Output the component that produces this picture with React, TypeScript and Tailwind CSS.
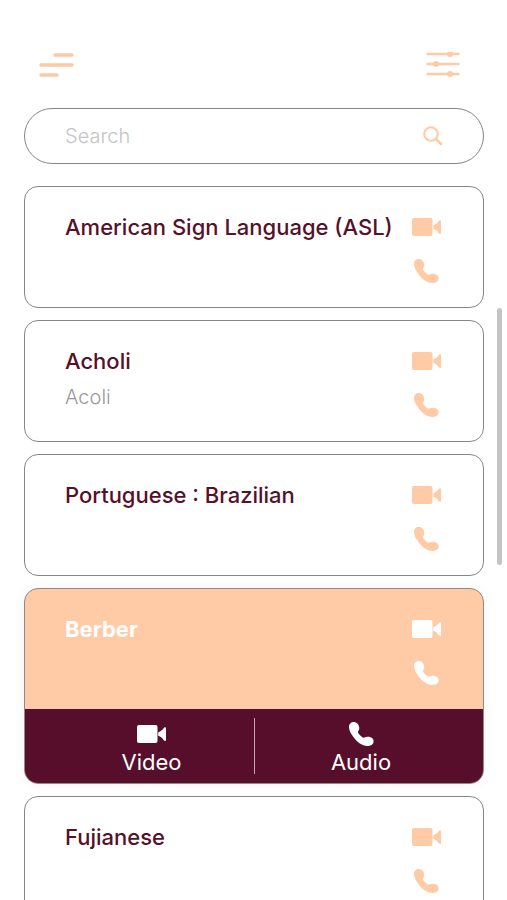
type IconProps = { className?: string };

function MenuIcon() {
  return (
    <svg width="36" height="26" viewBox="0 0 36 26" fill="none" stroke="#fac9a5" strokeWidth="3.4" strokeLinecap="round" aria-hidden="true">
      <path d="M17 3H34M3 13H34M3 23H19" />
    </svg>
  );
}

function SlidersIcon() {
  return (
    <svg width="34" height="26" viewBox="0 0 34 26" fill="none" stroke="#fecba6" strokeWidth="2.4" strokeLinecap="round" aria-hidden="true">
      <path d="M1.5 2H32.5M1.5 12H32.5M1.5 22H32.5" />
      <g fill="#fecba6" stroke="none">
        <circle cx="24" cy="2" r="3" />
        <circle cx="10" cy="12" r="3" />
        <circle cx="24" cy="22" r="3" />
      </g>
    </svg>
  );
}

function SearchIcon() {
  return (
    <svg width="20" height="20" viewBox="0 0 20 20" fill="none" stroke="#fecba6" strokeWidth="2" strokeLinecap="round" aria-hidden="true">
      <circle cx="8" cy="8" r="6.8" />
      <path d="M13 13L18 18" strokeWidth="2.6" />
    </svg>
  );
}

function VideoIcon({ className }: IconProps) {
  return (
    <svg width="30" height="18" viewBox="0 0 30 18" fill="currentColor" className={className} aria-hidden="true">
      <rect x="0" y="0" width="20.5" height="18" rx="2" />
      <path d="M21.2 7.4C23.6 6.6 25.6 4.8 27 2.8C27.8 2 29 2.2 29 3.2V15C29 16 27.8 16.2 27 15.4C25.6 13.4 23.6 11.6 21.2 10.8Z" />
    </svg>
  );
}

function PhoneIcon({ className }: IconProps) {
  return (
    <svg width="25" height="24" viewBox="0 0 25 24" fill="currentColor" className={className} aria-hidden="true">
      <path d="M0 5C0 2 2 0 4.8 0C7.6 0 9.8 2.4 10.2 5.2C10.5 7.2 9.8 8.4 9.2 9.2C8.7 10 9 10.8 9.8 11.8C10.8 13 11.8 14 13 15C13.8 15.7 14.6 15.8 15.4 15.4C17 14.6 19 14.5 21 15C23.4 15.7 25 17.6 24.6 20C24.2 22.8 21.6 24 18.6 24C12.6 24 7.6 19.6 4.2 14.8C1.8 11.4 0 8.4 0 5Z" />
    </svg>
  );
}

type Language = { name: string; native?: string; selected?: boolean };

const languages: Language[] = [
  { name: "American Sign Language (ASL)" },
  { name: "Acholi", native: "Acoli" },
  { name: "Portuguese : Brazilian" },
  { name: "Berber", selected: true },
  { name: "Fujianese" },
];

function LanguageCard({ name, native, selected }: Language) {
  return (
    <li
      className={
        selected
          ? "shrink-0 overflow-hidden rounded-[14px] border border-[#8f8a84] bg-[#fecba6] text-white shadow-[0_0_12px_rgba(0,60,50,0.06)]"
          : "shrink-0 overflow-hidden rounded-[14px] border border-[#868686] bg-white text-[#561029]"
      }
    >
      <div className="flex h-[120px] justify-between pt-[26px] pr-[41px] pl-10">
        <div className="whitespace-nowrap">
          <h2 className={selected ? "text-[22px] leading-7 font-bold" : "text-[22px] leading-7 font-medium"}>{name}</h2>
          {native && <p className="mt-2 text-[20px] leading-7 font-light text-[#999999]">{native}</p>}
        </div>
        <div className={selected ? "flex flex-col gap-[23px] pt-[5px] text-white" : "flex flex-col gap-[23px] pt-[5px] text-[#fecba6]"}>
          <button type="button" aria-label={"Video call, " + name} className="block">
            <VideoIcon />
          </button>
          <button type="button" aria-label={"Audio call, " + name} className="block pl-0.5">
            <PhoneIcon />
          </button>
        </div>
      </div>
      {selected && (
        <div className="grid h-[74px] grid-cols-2 items-center bg-[#570e2a] text-[22px] leading-6">
          <button type="button" className="flex h-14 flex-col items-center gap-1 pt-1 pl-6">
            <span className="flex h-6 items-center"><VideoIcon /></span>
            Video
          </button>
          <button type="button" className="flex h-14 flex-col items-center gap-1 border-l border-[#c5a5b1] pt-1 pr-4">
            <PhoneIcon />
            Audio
          </button>
        </div>
      )}
    </li>
  );
}

export default function App() {
  return (
    <main className="relative flex h-screen flex-col overflow-hidden bg-white pt-[52px] pr-[23px] pl-6 font-['Inter','Liberation_Sans',sans-serif]">
      <header className="flex shrink-0 justify-between pr-6 pl-3.5">
        <button type="button" aria-label="Menu"><MenuIcon /></button>
        <button type="button" aria-label="Filters"><SlidersIcon /></button>
      </header>
      <label className="mt-[30px] flex h-14 shrink-0 items-center rounded-full border border-[#868686] px-10">
        <input
          type="search"
          aria-label="Search"
          placeholder="Search"
          className="min-w-0 flex-1 bg-transparent text-[20px] leading-7 font-light text-[#561029] outline-none placeholder:text-[#c4c4c4]"
        />
        <SearchIcon />
      </label>
      <ul className="mt-[22px] flex flex-col gap-3">
        {languages.map((language) => (
          <LanguageCard key={language.name} {...language} />
        ))}
      </ul>
      <div className="absolute top-[308px] right-[5px] h-[257px] w-[5px] rounded-full bg-[#c4c4c4]" />
    </main>
  );
}
